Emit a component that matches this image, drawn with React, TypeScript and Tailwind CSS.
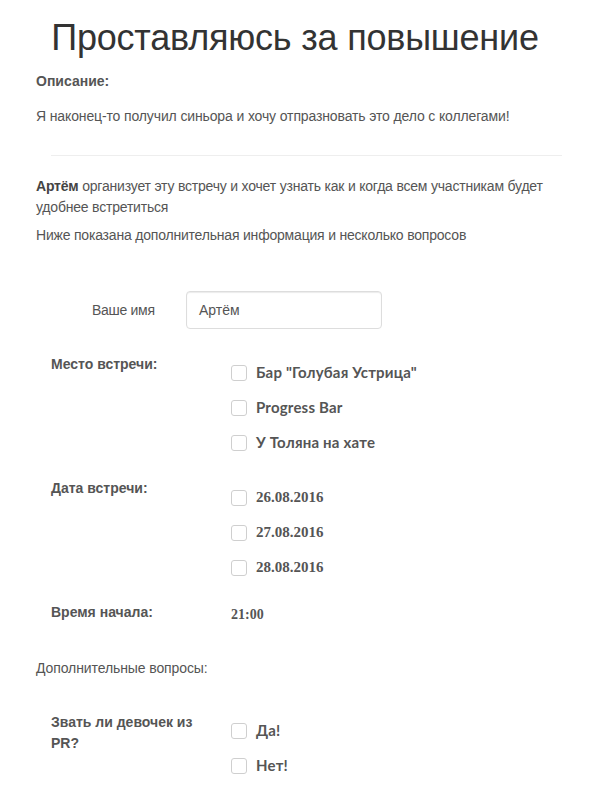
import React from "react";

const sans = { fontFamily: '"Liberation Sans", Arial, sans-serif' };

function Box() {
  return (
    <span className="inline-block h-4 w-4 shrink-0 rounded-[3px] border border-[#cfcfcf] bg-white" />
  );
}

function Option({ label, serif = false }: { label: string; serif?: boolean }) {
  return (
    <label className="flex h-[35px] items-center gap-[9px]">
      <Box />
      <span
        className={
          serif
            ? "font-['Liberation_Serif',serif] text-[15px] font-bold text-[#555]"
            : "font-['Lato',sans-serif] text-[15px] font-bold tracking-[0.2px] text-[#555]"
        }
      >
        {label}
      </span>
    </label>
  );
}

function Field({
  title,
  children,
  offset = "pt-0",
  className = "",
}: {
  title: string;
  children: React.ReactNode;
  offset?: string;
  className?: string;
}) {
  return (
    <div className={"flex pl-[15px] " + className}>
      <div className="w-[180px] pr-6 text-[14px] font-bold leading-[21px] text-[#555]">{title}</div>
      <div className={offset}>{children}</div>
    </div>
  );
}

export default function App() {
  return (
    <div className="min-h-[803px] bg-white pl-[36px] pr-[44px] text-[#555]" style={sans}>
      <h1 className="pr-[8px] pt-[14px] text-center text-[36px] font-normal leading-[48px] tracking-[-0.2px] text-[#333]">
        Проставляюсь за повышение
      </h1>

      <p className="mt-[9px] text-[14px] font-bold leading-5">Описание:</p>
      <p className="mt-[15px] text-[14px] tracking-[-0.13px] leading-5">
        Я наконец-то получил синьора и хочу отпразновать это дело с коллегами!
      </p>

      <hr className="mb-[20px] ml-[15px] mt-[29px] border-t border-[#eee]" />

      <p className="text-[14px] leading-[21px] tracking-[-0.2px]">
        <b className="text-[#444]">Артём</b> организует эту встречу и хочет узнать как и когда всем участникам будет
        удобнее встретиться
      </p>
      <p className="mt-[7px] text-[14px] leading-5 tracking-[-0.2px]">
        Ниже показана дополнительная информация и несколько вопросов
      </p>

      <div className="mt-[46px] flex items-center">
        <span className="w-[150px] pl-[56px] text-[14px] tracking-[-0.3px]">Ваше имя</span>
        <div className="flex h-[38px] w-[196px] items-center rounded-[4px] border border-[#ddd] bg-white px-3 text-[14px] text-[#555] shadow-[inset_0_1px_1px_rgba(0,0,0,0.08)]">
          Артём
        </div>
      </div>

      <div className="mt-[25px] flex flex-col gap-[17px]">
        <Field title="Место встречи:" offset="pt-[1px]">
          <Option label={'Бар "Голубая Устрица"'} />
          <Option label="Progress Bar" />
          <Option label="У Толяна на хате" />
        </Field>

        <Field title="Дата встречи:" offset="pt-[2px]" className="mt-[1px]">
          <Option label="26.08.2016" serif />
          <Option label="27.08.2016" serif />
          <Option label="28.08.2016" serif />
        </Field>

        <Field title="Время начала:">
          <span className="font-['Liberation_Serif',serif] text-[14px] font-bold leading-[21px] text-[#555]">21:00</span>
        </Field>
      </div>

      <p className="mt-[32px] text-[14px] leading-5 tracking-[-0.1px]">Дополнительные вопросы:</p>

      <div className="mt-[34px]">
        <Field title="Звать ли девочек из PR?" offset="pt-[1px]">
          <Option label="Да!" />
          <Option label="Нет!" />
        </Field>
      </div>
    </div>
  );
}
